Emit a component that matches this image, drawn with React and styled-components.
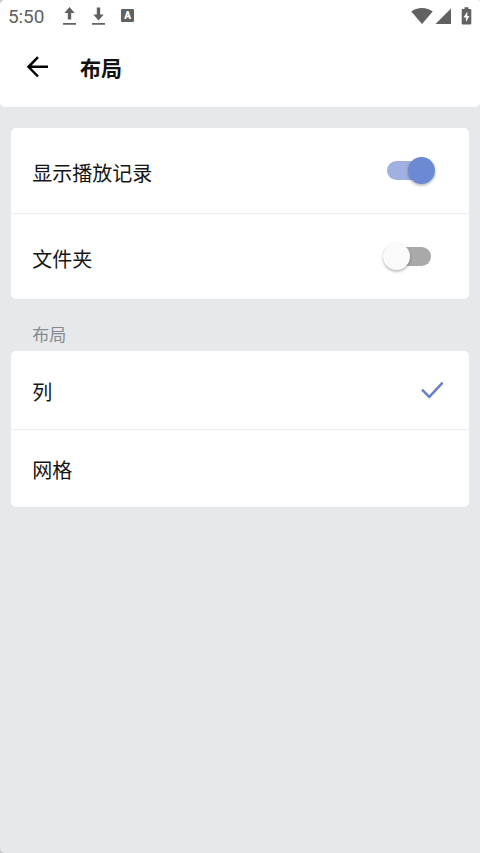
import React, { useState } from 'react';
import styled, { createGlobalStyle } from 'styled-components';

const GlobalStyle = createGlobalStyle`
    * {
        box-sizing: border-box;
    }

    body {
        margin: 0;
        background-color: #c9cacb;
        font-family: Roboto, "Noto Sans CJK SC", sans-serif;
    }
`;

const Screen = styled.div`
    display: flex;
    flex-direction: column;
    height: 853px;
    width: 480px;
    background-color: #e7e8e9;
    border-radius: 5px 2px 0 5px;
    overflow: hidden;
`;

const Header = styled.header`
    height: 106.5px;
    background-color: #ffffff;
    border-radius: 0 0 5px 5px;
`;

const StatusBar = styled.div`
    display: flex;
    align-items: center;
    justify-content: space-between;
    height: 32px;
    padding: 0 8px;
    color: #616161;
`;

const StatusGroup = styled.div`
    display: flex;
    align-items: center;

    svg {
        display: block;
    }
`;

const Time = styled.span`
    width: 53.5px;
    padding-top: 1px;
    font-size: 19px;
    line-height: 32px;
    letter-spacing: -0.1px;
`;

const Toolbar = styled.div`
    display: flex;
    align-items: center;
    height: 70px;
    padding-left: 26px;
`;

const BackButton = styled.button`
    display: flex;
    width: 54px;
    padding: 0;
    border: none;
    background: none;
    color: #000000;
`;

const Title = styled.h1`
    margin: 0;
    padding-top: 4px;
    font-size: 21px;
    line-height: 30px;
    font-weight: 700;
    color: #111111;
`;

const Content = styled.main`
    padding: 21.5px 11px 0 10.5px;
`;

const Card = styled.section`
    background-color: #ffffff;
    border-radius: 5px;
`;

const Row = styled.div`
    display: flex;
    align-items: center;
    justify-content: space-between;
    height: ${({ $height }) => $height}px;
    padding: 2px 25.5px 0 21.7px;
    color: #151515;
    font-size: 20px;
    cursor: pointer;

    & + & {
        border-top: 1px solid #eeeeee;
    }
`;

const SwitchRow = styled(Row)`
    padding-top: 4px;
`;

const SectionTitle = styled.h2`
    height: 52px;
    margin: 0;
    padding: 23px 0 0 21.7px;
    font-size: 17px;
    line-height: 26px;
    font-weight: 400;
    color: #858c92;
`;

const Track = styled.span`
    display: flex;
    align-items: center;
    width: 44px;
    height: 19px;
    margin-right: 12.5px;
    margin-bottom: 4px;
    border-radius: 10px;
    background-color: ${({ $on }) => ($on ? '#a0b1e1' : '#a9a9a9')};
`;

const Thumb = styled.span`
    flex: none;
    width: 27px;
    height: 27px;
    margin-left: ${({ $on }) => ($on ? '21px' : '-4.5px')};
    border-radius: 50%;
    background-color: ${({ $on }) => ($on ? '#6c89d3' : '#fafafa')};
    box-shadow: 0 1.5px 3px rgba(0, 0, 0, 0.3);
`;

const Switch = ({ on }) => (
    <Track $on={on}>
        <Thumb $on={on} />
    </Track>
);

const UploadIcon = () => (
    <svg width="15" height="20" viewBox="0 0 15 20" fill="currentColor">
        <path d="M7.5 1L12.7 7H9.2V13.5H5.8V7H2.3Z" />
        <path d="M1 17H14V18.7H1Z" />
    </svg>
);

const DownloadIcon = () => (
    <svg width="15" height="20" viewBox="0 0 15 20" fill="currentColor">
        <path d="M7.5 14.5L12.7 8.5H9.2V1.5H5.8V8.5H2.3Z" />
        <path d="M1 17H14V18.7H1Z" />
    </svg>
);

const LetterBadge = styled.span`
    display: flex;
    align-items: center;
    justify-content: center;
    width: 13px;
    height: 13px;
    margin: 0 0 1px 1px;
    border-radius: 1px;
    background-color: #616161;
    color: #ffffff;
    font-size: 10px;
    line-height: 13px;
    font-weight: 900;
`;

const NotificationIcons = styled(StatusGroup)`
    gap: 14.3px;
`;

const WifiIcon = () => (
    <svg width="22" height="18" viewBox="0 0 22 18" fill="currentColor">
        <path d="M11 17L0.3 4.4C3.1 2.1 6.8 0.9 11 0.9S18.9 2.1 21.7 4.4Z" />
    </svg>
);

const SignalIcon = () => (
    <svg width="17" height="18" viewBox="0 0 17 18" fill="currentColor">
        <path d="M16 1.5V17H0.5Z" />
    </svg>
);

const BatteryIcon = () => (
    <svg width="11" height="18" viewBox="0 0 11 18" fill="currentColor">
        <path d="M3.5 0.2H7.5V2H9.2Q10.3 2 10.3 3.1V16.4Q10.3 17.5 9.2 17.5H1.8Q0.7 17.5 0.7 16.4V3.1Q0.7 2 1.8 2H3.5Z" />
        <path d="M6.3 4.5L2.5 10.5H4.9V15L8.5 8.9H6.3Z" fill="#ffffff" />
    </svg>
);

const SystemIcons = styled(StatusGroup)`
    gap: 2px;
    padding-bottom: 1px;

    svg:last-child {
        margin-left: 7px;
    }
`;

const BackIcon = () => (
    <svg width="24" height="24" viewBox="0 0 24 24" fill="none" stroke="currentColor" strokeWidth="2.5">
        <path d="M22 11.8H2.5M12 2.1L2.5 11.8L12 21.5" />
    </svg>
);

const CheckIcon = () => (
    <svg width="24" height="20" viewBox="0 0 24 20" fill="none" stroke="#6681ca" strokeWidth="2.5">
        <path d="M2 8.7L9.3 15.9L22.6 1.7" />
    </svg>
);

const layouts = ['列', '网格'];

const App = () => {
    const [showHistory, setShowHistory] = useState(true);
    const [showFolders, setShowFolders] = useState(false);
    const [layout, setLayout] = useState('列');

    return (
        <>
            <GlobalStyle />
            <Screen>
                <Header>
                    <StatusBar>
                        <StatusGroup>
                            <Time>5:50</Time>
                            <NotificationIcons>
                                <UploadIcon />
                                <DownloadIcon />
                                <LetterBadge>A</LetterBadge>
                            </NotificationIcons>
                        </StatusGroup>
                        <SystemIcons>
                            <WifiIcon />
                            <SignalIcon />
                            <BatteryIcon />
                        </SystemIcons>
                    </StatusBar>
                    <Toolbar>
                        <BackButton><BackIcon /></BackButton>
                        <Title>布局</Title>
                    </Toolbar>
                </Header>

                <Content>
                    <Card>
                        <SwitchRow $height={85} onClick={() => setShowHistory(!showHistory)}>
                            显示播放记录
                            <Switch on={showHistory} />
                        </SwitchRow>
                        <SwitchRow $height={86} onClick={() => setShowFolders(!showFolders)}>
                            文件夹
                            <Switch on={showFolders} />
                        </SwitchRow>
                    </Card>

                    <SectionTitle>布局</SectionTitle>
                    <Card>
                        {layouts.map((name) => (
                            <Row key={name} $height={78} onClick={() => setLayout(name)}>
                                {name}
                                {layout === name && <CheckIcon />}
                            </Row>
                        ))}
                    </Card>
                </Content>
            </Screen>
        </>
    );
};

export default App;
